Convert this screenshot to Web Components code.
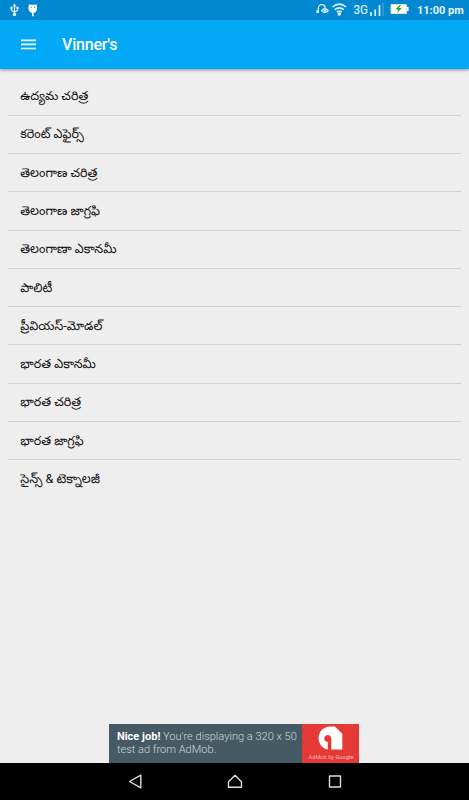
<!DOCTYPE html>
<html lang="te">
<head>
<meta charset="utf-8">
<title>Vinner's</title>
<style>
  html, body {
    margin: 0;
    height: 100%;
    overflow: hidden;
    background: #eee;
    font-family: Roboto, "Noto Sans", "Noto Sans Telugu", sans-serif;
  }
</style>
</head>
<body>
<vinners-app></vinners-app>

<script>
  const make = (name, html) => {
    const template = document.createElement('template');
    template.innerHTML = html;
    customElements.define(name, class extends HTMLElement {
      constructor() {
        super();
        this.attachShadow({ mode: 'open' }).appendChild(template.content.cloneNode(true));
      }
    });
  };

  make('status-bar', `
    <style>
      :host {
        display: flex;
        align-items: center;
        height: 19.5px;
        box-sizing: border-box;
        background: #0288d1;
        color: #e6f4fc;
      }
      svg { display: block; flex: none; }
      .left { margin-left: 9px; }
      .right { margin-left: auto; }
      time { font-size: 11px; font-weight: 700; line-height: 19px; width: 46px; margin: 1px 6px 0 8px; white-space: nowrap; }
    </style>
    <svg class="left" width="31" height="19" viewBox="0 0 31 19" fill="none" stroke="#e6f4fc">
      <path d="M5.500 5v10M2.500 8v2.200l3 2 3-2V8" stroke-width="1.200"/>
      <path d="M3.500 6.500 5.500 3.500l2 3zM1.400 6.800h2.200v2.200h-2.200zM7.400 6.800h2.200v2.200h-2.200z" fill="#e6f4fc" stroke="none"/>
      <circle cx="5.500" cy="14.500" r="1.700" fill="#e6f4fc" stroke="none"/>
      <path d="M20 4.300l2 .5h3.500l2-.5.6 3.200c0 2.800-1 4.800-2.600 5.200h-.9v3.500h-1.500v-3.500h-.9c-1.600-.4-2.800-2.400-2.800-5.200z" fill="#fff" stroke="none"/>
      <path d="M21.800 7.500h1.200M25 7.500h1.200" stroke="#4fa9dc"/>
    </svg>
    <svg class="right" width="94" height="19" viewBox="315 0 94 19" fill="none" stroke="#dceffa">
      <path d="M318.300 11V8.500c0-2 1.500-3.800 3.400-3.800s3.400 1.500 3.500 3.300" stroke-width="1.300"/>
      <path d="M316.500 10h2.500v3h-2.500z" fill="#dceffa" stroke="none"/>
      <path d="M321.700 10.600q3.300-4 6.600 0q-3.300 4-6.600 0z" stroke-width="1.200"/>
      <circle cx="325" cy="10.600" r="1.400" fill="#dceffa" stroke="none"/>
      <path d="M332.500 7q6.800-5.800 13.600 0M334.800 9.700q4.500-3.800 9 0M336.900 12.100q2.400-2 4.800 0" stroke-width="1.600"/>
      <circle cx="339.300" cy="14" r="1.700" fill="#fff" stroke="none"/>
      <text x="353.500" y="14" font-size="13" textLength="14.500" lengthAdjust="spacingAndGlyphs" fill="#dceffa" stroke="#dceffa" stroke-width=".2">3G</text>
      <path d="M371 12v4M375.200 9.500v6.500M379.500 5v11" stroke-width="1.700"/>
      <path d="M383 3v13" stroke="#4aa9dd"/>
      <path d="M391 4.500h15.500v9H391z" fill="#fff" stroke="#d4e6d4"/>
      <path d="M407.800 7v4" stroke="#fff" stroke-width="1.600"/>
      <path d="M399.800 5l-4.300 4.600h2.800l-1.300 3.400 4.800-5h-2.900l2.100-3z" fill="#21a321" stroke="none"/>
    </svg>
    <time>11:00 pm</time>
  `);

  make('app-toolbar', `
    <style>
      :host {
        display: flex;
        align-items: center;
        height: 49.5px;
        box-sizing: border-box;
        padding: 2px 0 0 21px;
        background: #03a9f4;
        box-shadow: 0 1px 3px rgba(0, 0, 0, .4);
        color: #fff;
        position: relative;
      }
      svg { display: block; margin-right: 26px; }
      h1 { margin: 0; font-size: 16px; font-weight: 500; line-height: 20px; letter-spacing: -.2px; }
    </style>
    <svg width="15" height="12" viewBox="0 0 15 12" stroke="#f2faff" stroke-width="1.700">
      <path d="M0 1.300h15M0 5.400h15M0 9.500h15"/>
    </svg>
    <h1><slot></slot></h1>
  `);

  make('subject-row', `
    <style>
      :host {
        display: flex;
        align-items: center;
        height: 38.3px;
        box-sizing: border-box;
        padding: 0 12.3px;
        border-bottom: 1px solid #d2d2d2;
        color: #111;
        font-size: 12.6px;
        line-height: 20px;
        white-space: nowrap;
      }
      :host(:last-child) { border-bottom-color: transparent; }
    </style>
    <slot></slot>
  `);

  make('ad-banner', `
    <style>
      :host {
        display: flex;
        width: 250px;
        height: 39px;
        margin: 0 auto 0 109.4px;
        background: #455a64;
        color: #cfd8dc;
      }
      p {
        flex: 1;
        margin: 0;
        padding: 5.5px 0 0 7.5px;
        font-size: 11.05px;
        font-weight: 300;
        line-height: 13px;
        white-space: nowrap;
      }
      b { color: #fff; font-weight: 700; }
      svg { display: block; background: #e53935; }
    </style>
    <p><b>Nice job!</b> You're displaying a 320 x 50<br>test ad from AdMob.</p>
    <svg width="57" height="39" viewBox="0 0 57 39">
      <path d="M25.800 25.600C20.500 24.700 16.600 20 16.600 14.300 16.600 7.500 21.800 2.500 28 2.500h5l7.300 7.300v15.700h-11V14.500c0-2-1.500-3.600-3.500-3.600s-3.500 1.600-3.500 3.600 1.500 3.500 3.500 3.500z" fill="#fff"/>
      <text x="6.500" y="34.500" font-size="6" textLength="45" lengthAdjust="spacingAndGlyphs" fill="#f5b0ae">AdMob by <tspan font-weight="500">Google</tspan></text>
    </svg>
  `);

  make('nav-buttons', `
    <style>
      :host {
        display: flex;
        justify-content: center;
        height: 37px;
        background: #000;
      }
      svg { display: block; }
    </style>
    <svg width="214" height="37" viewBox="127.500 763 214 37" fill="none" stroke="#ddd" stroke-width="1.400" stroke-linejoin="round">
      <path d="M140.300 775.200v12.600L129 781.500z"/>
      <path d="M228 787.200v-5.500l6.500-6.400 6.500 6.400v5.500z"/>
      <path d="M329 776h11v11h-11z"/>
    </svg>
  `);

  make('vinners-app', `
    <style>
      :host {
        display: flex;
        flex-direction: column;
        height: 100vh;
        background: #eee;
      }
      main { flex: 1; padding: 8.4px 8px 0; }
    </style>
    <status-bar></status-bar>
    <app-toolbar>Vinner's</app-toolbar>
    <main>
      <subject-row>ఉద్యమ చరిత్ర</subject-row>
      <subject-row>కరెంట్ ఎఫైర్స్</subject-row>
      <subject-row>తెలంగాణ చరిత్ర</subject-row>
      <subject-row>తెలంగాణ జాగ్రఫి</subject-row>
      <subject-row>తెలంగాణా ఎకానమీ</subject-row>
      <subject-row>పాలిటీ</subject-row>
      <subject-row>ప్రీవియస్-మోడల్</subject-row>
      <subject-row>భారత ఎకానమీ</subject-row>
      <subject-row>భారత చరిత్ర</subject-row>
      <subject-row>భారత జాగ్రఫి</subject-row>
      <subject-row>సైన్స్ &amp; టెక్నాలజీ</subject-row>
    </main>
    <ad-banner></ad-banner>
    <nav-buttons></nav-buttons>
  `);
</script>
</body>
</html>
